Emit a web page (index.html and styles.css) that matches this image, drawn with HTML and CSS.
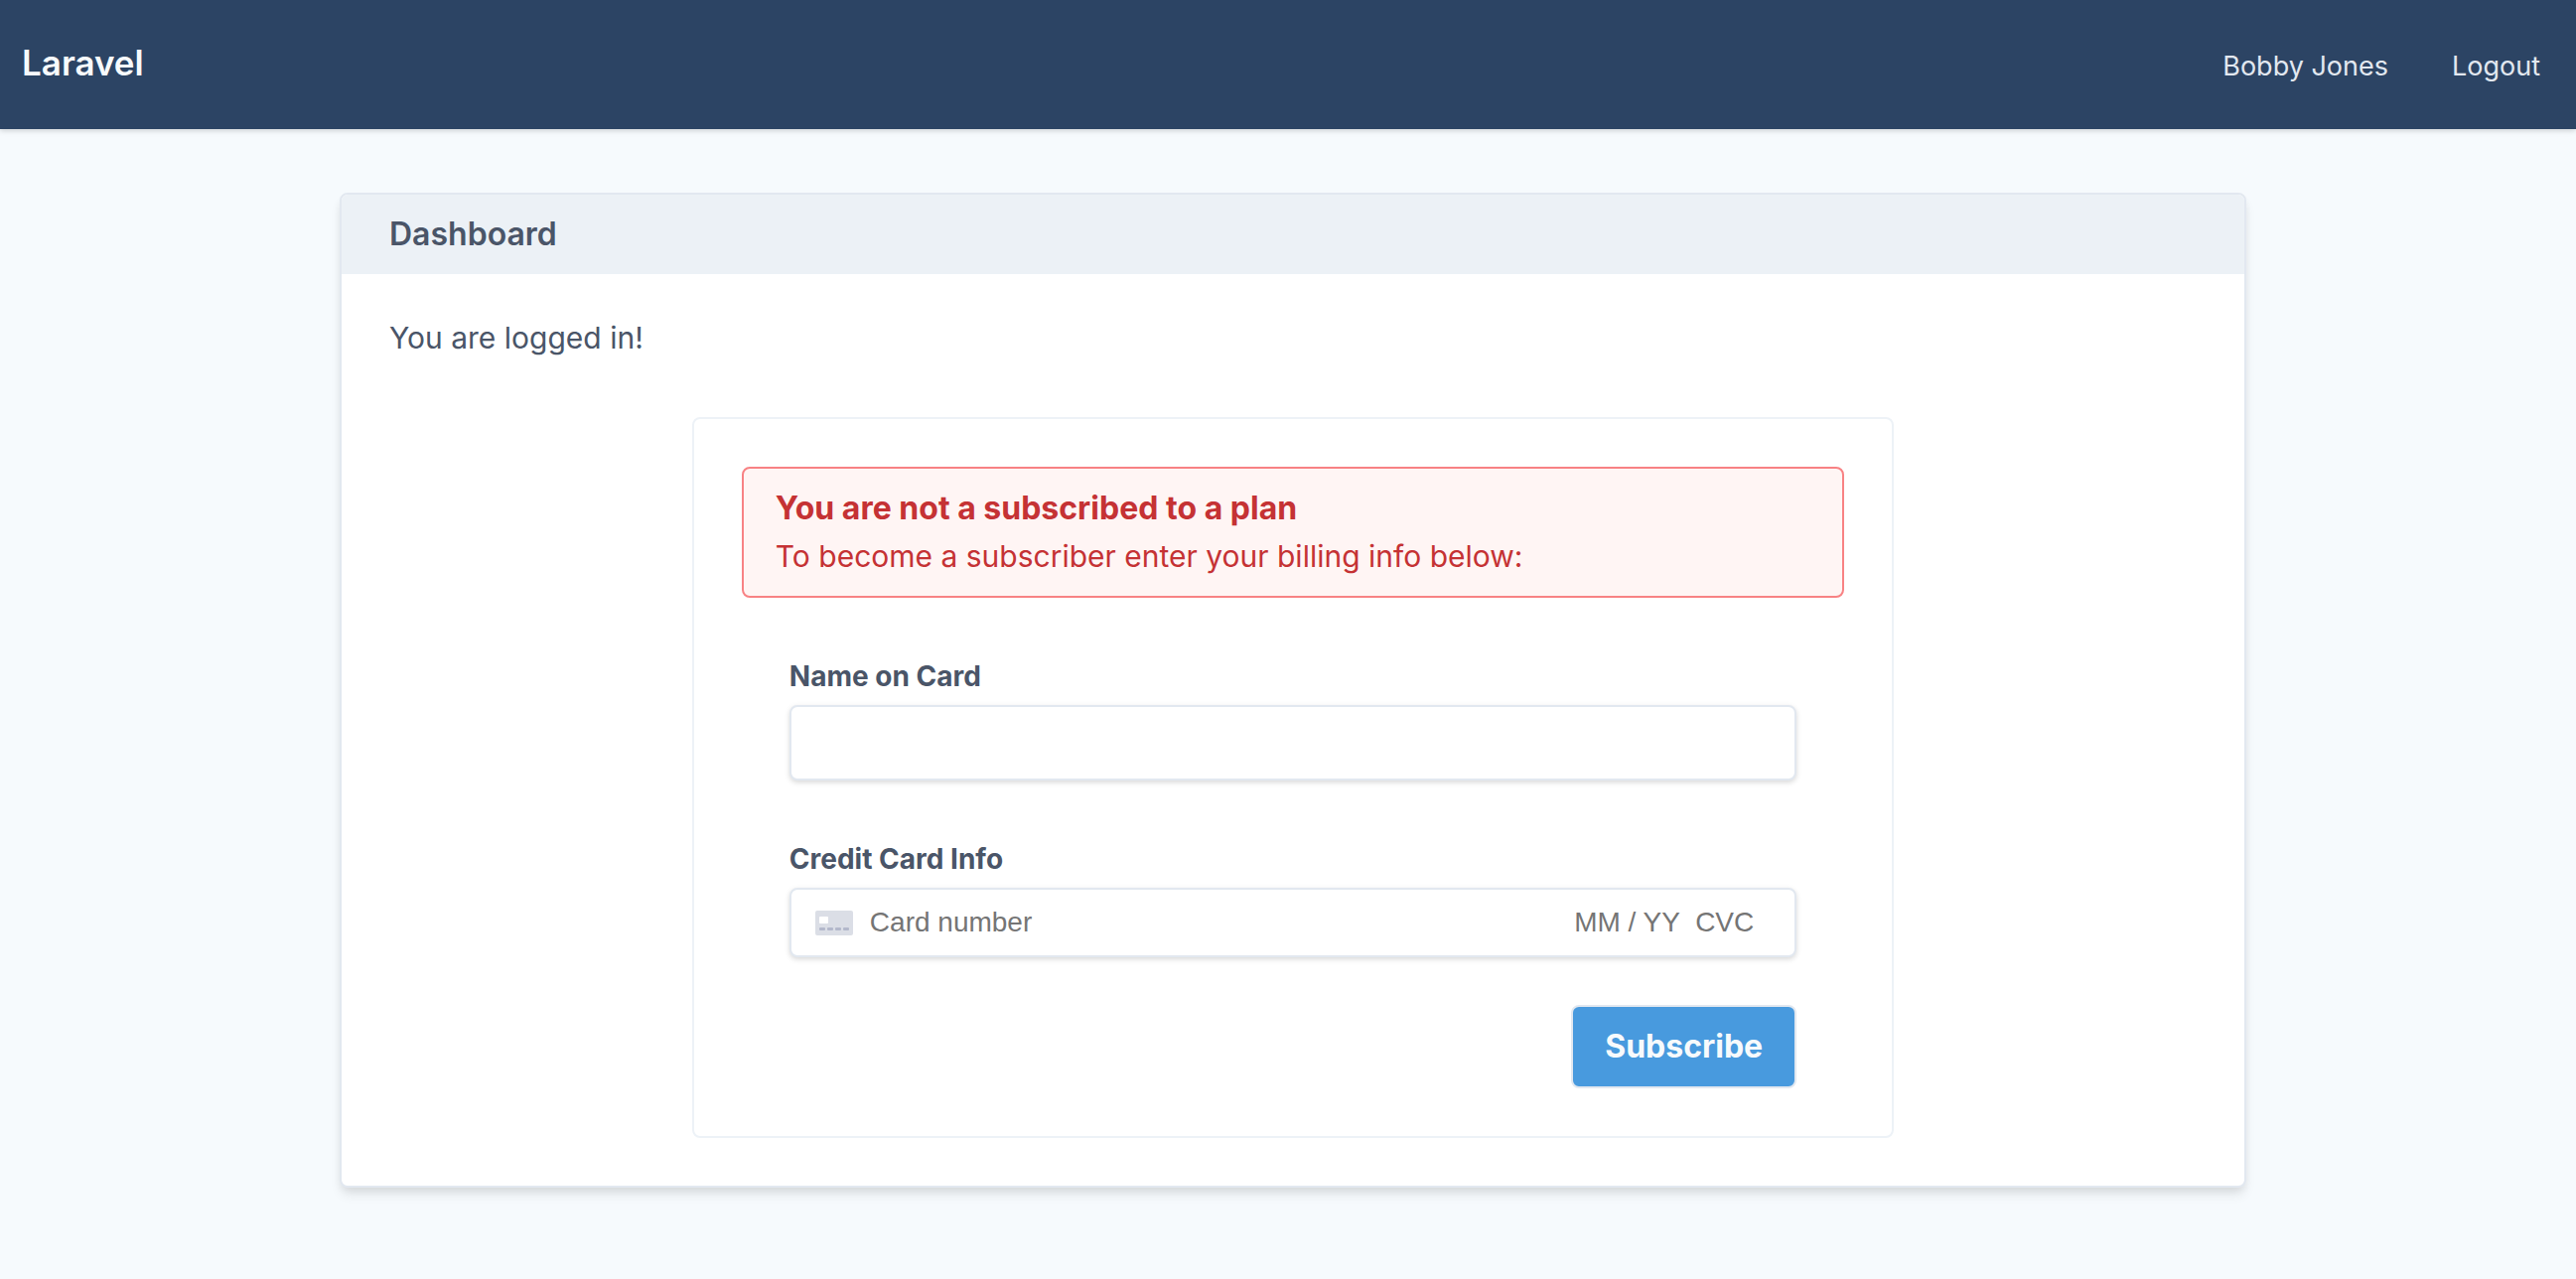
FILE: index.html
```html
<!DOCTYPE html>
<html lang="en">
<head>
<meta charset="utf-8">
<meta name="viewport" content="width=device-width, initial-scale=1">
<title>Laravel</title>
<link rel="stylesheet" href="styles.css">
</head>
<body>
<header class="navbar">
  <a class="brand" href="#">Laravel</a>
  <nav class="nav-links">
    <a href="#">Bobby Jones</a>
    <a href="#">Logout</a>
  </nav>
</header>

<main class="page">
  <section class="card">
    <h1 class="card-header">Dashboard</h1>
    <div class="card-body">
      <p class="status">You are logged in!</p>

      <div class="billing">
        <div class="alert" role="alert">
          <p class="alert-title">You are not a subscribed to a plan</p>
          <p>To become a subscriber enter your billing info below:</p>
        </div>

        <form class="billing-form">
          <div class="field">
            <label for="card-name">Name on Card</label>
            <input class="control" id="card-name" type="text">
          </div>

          <div class="field">
            <label for="card-number">Credit Card Info</label>
            <div class="control card-element">
              <svg class="card-icon" viewBox="0 0 38 25" aria-hidden="true">
                <rect width="38" height="25" rx="2" fill="#dbdee6"/>
                <rect x="4" y="6" width="9" height="7" rx="1" fill="#fff"/>
                <g fill="#b3b8cb">
                  <rect x="4" y="17" width="6" height="3" rx="1"/>
                  <rect x="12" y="17" width="6" height="3" rx="1"/>
                  <rect x="20" y="17" width="6" height="3" rx="1"/>
                  <rect x="28" y="17" width="6" height="3" rx="1"/>
                </g>
              </svg>
              <input class="card-number" id="card-number" type="text" inputmode="numeric" placeholder="Card number">
              <input class="card-expiry" type="text" inputmode="numeric" placeholder="MM / YY" aria-label="Expiry date">
              <input class="card-cvc" type="text" inputmode="numeric" placeholder="CVC" aria-label="Security code">
            </div>
          </div>

          <button class="submit" type="submit">Subscribe</button>
        </form>
      </div>
    </div>
  </section>
</main>
</body>
</html>
```
FILE: styles.css
```css
*,
*::before,
*::after {
  box-sizing: border-box;
}

body {
  margin: 0;
  min-height: 100vh;
  background: #f6fafd;
  color: #4a5568;
  font-family: Inter, "Liberation Sans", sans-serif;
  font-size: 30px;
  line-height: 48px;
}

h1,
p {
  margin: 0;
}

a {
  color: inherit;
  text-decoration: none;
}

/* Top bar */
.navbar {
  display: flex;
  align-items: baseline;
  justify-content: space-between;
  padding: 36px 36px 40px 22px;
  background: #2c4464;
  box-shadow: 0 2px 6px rgba(0, 0, 0, 0.1), 0 2px 4px rgba(0, 0, 0, 0.06);
}

.brand {
  color: #f7fafc;
  font-size: 35px;
  font-weight: 600;
  line-height: 54px;
}

.nav-links {
  display: flex;
  gap: 64px;
  color: #e2e8f0;
  font-size: 27px;
  line-height: 42px;
}

/* Dashboard card */
.page {
  padding: 64px 12px 64px 22px;
}

.card {
  width: 75%;
  margin: 0 auto;
  overflow: hidden;
  background: #fff;
  border: 2px solid #e2e8f0;
  border-radius: 8px;
  box-shadow: 0 8px 12px -2px rgba(0, 0, 0, 0.1), 0 4px 8px -2px rgba(0, 0, 0, 0.06);
}

.card-header {
  padding: 16px 48px;
  background: #ecf1f6;
  font-size: 32px;
  font-weight: 600;
  line-height: 48px;
}

.card-body {
  padding: 40px 48px 48px;
}

.status {
  margin-bottom: 56px;
}

/* Billing box */
.billing {
  width: 66.5%;
  margin: 0 auto;
  padding: 48px;
  border: 2px solid #edf2f7;
  border-radius: 8px;
}

.alert {
  padding: 16px 32px;
  background: #fff5f4;
  border: 2px solid #f88284;
  border-radius: 8px;
  color: #c53234;
}

.alert-title {
  font-size: 32px;
  font-weight: 700;
}

.billing-form {
  display: flex;
  flex-direction: column;
  padding: 58px 48px 0;
}

.field {
  margin-bottom: 58px;
}

.field:nth-of-type(2) {
  margin-bottom: 48px;
}

label {
  display: block;
  margin-bottom: 8px;
  font-size: 28px;
  font-weight: 700;
  line-height: 42px;
}

.control {
  width: 100%;
  background: #fff;
  border: 2px solid #e2e8f0;
  border-radius: 8px;
  box-shadow: 0 2px 6px rgba(0, 0, 0, 0.1), 0 2px 4px rgba(0, 0, 0, 0.06);
}

input {
  display: block;
  font: inherit;
  color: inherit;
}

input.control {
  height: 76px;
  padding: 12px 24px;
}

.card-element {
  display: flex;
  align-items: center;
  height: 70px;
  padding: 0 24px;
}

.card-element input {
  padding: 0;
  border: 0;
  background: none;
  font-family: "Liberation Sans", Arial, sans-serif;
  font-size: 28px;
  line-height: 34px;
}

.card-element input::placeholder {
  color: #757575;
}

.card-icon {
  flex: none;
  width: 38px;
  height: 25px;
  margin-right: 17px;
}

.card-number {
  flex: 1;
  min-width: 0;
}

.card-expiry {
  width: 122px;
}

.card-cvc {
  width: 76px;
}

.submit {
  align-self: flex-end;
  padding: 16px 32px;
  background: #489ade;
  border: 2px solid #e2e8f0;
  border-radius: 8px;
  color: #f7fafc;
  font: inherit;
  font-size: 32px;
  font-weight: 700;
}
```
